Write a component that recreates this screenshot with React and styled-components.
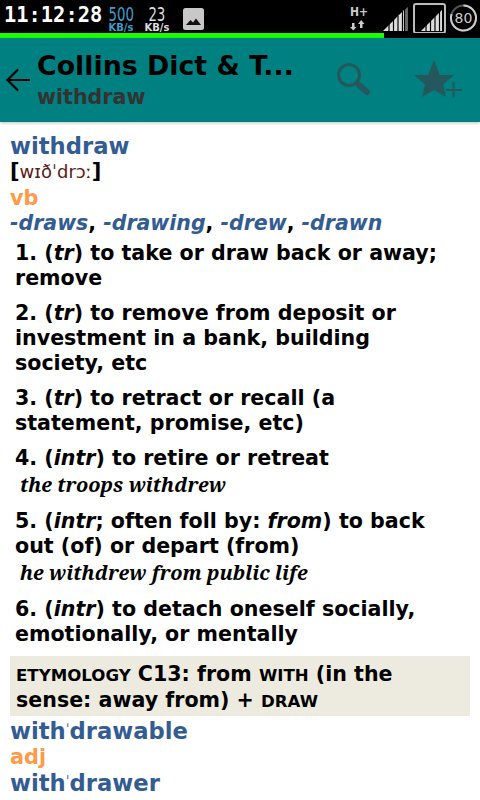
import React from "react";
import styled, { createGlobalStyle } from "styled-components";

const Global = createGlobalStyle`
  html, body { margin: 0; padding: 0; background: #fff; }
  body { width: 480px; height: 800px; overflow: hidden; font-family: "DejaVu Sans", sans-serif; }
`;
const Page = styled.div`width: 480px; height: 800px; overflow: hidden; display: flex; flex-direction: column;`;
const StatusBar = styled.div`
  height: 33px; background: #000; display: flex; align-items: flex-start; flex: none; color: #ddd;
`;
const Clock = styled.span`
  font: bold 20.4px/30px "DejaVu Sans Mono", "DejaVu Sans", monospace; color: #fff; margin-left: 4px; width: 100px;
`;
const Speed = styled.div`
  width: ${p => p.$w}px; display: flex; flex-direction: column; align-items: center; color: ${p => p.$c}; padding-top: 5px;
`;
const SpeedNum = styled.span`font: 19px/18px "DejaVu Sans Condensed", "DejaVu Sans", sans-serif; transform: scaleX(.78);`;
const SpeedUnit = styled.span`font: bold 10px/10px "DejaVu Sans", sans-serif;`;
const PhotoIcon = styled.svg`margin: 8px 0 0 7px; flex: none;`;
const Spacer = styled.div`flex: 1;`;
const Progress = styled.div`height: 5px; background: #000; flex: none;`;
const ProgressFill = styled.div`height: 100%; background: #1cff00;`;
const ActionBar = styled.div`
  height: 84px; background: #008080; display: flex; flex: none; align-items: center; box-shadow: 0 1px 3px rgba(0,0,0,.25);
`;
const BackIcon = styled.svg`margin: 0 0 0 5px; flex: none;`;
const TitleBox = styled.div`width: 294px; margin-left: 6px; display: flex; flex-direction: column; margin-top: -2px;`;
const Title = styled.div`font: bold 26.8px/36px "DejaVu Sans", sans-serif; color: #000; white-space: nowrap;`;
const Subtitle = styled.div`font: bold 20.6px/26px "DejaVu Sans", sans-serif; color: #333;`;
const ActionIcon = styled.svg`flex: none; margin-left: ${p => p.$ml}px;`;
const Content = styled.div`padding: 11px 10px 0; flex: 1; font-weight: bold; color: #000;`;
const Head = styled.div`font: bold 22.7px/26px "DejaVu Sans", sans-serif; color: #335c92;`;
const Tick = styled.span`font-size: 14px; font-weight: 400; vertical-align: 5px; line-height: 0;`;
const Phon = styled.div`font: 18px/26px "DejaVu Sans", sans-serif; color: #5c1a1a;`;
const Bracket = styled.span`font-weight: bold; font-size: 21px; color: #000; line-height: 0;`;
const Pos = styled.div`font: bold 20.8px/26px "DejaVu Sans", sans-serif; color: #ff9a4a;`;
const Forms = styled.div`font: bold 20.5px/24px "DejaVu Sans", sans-serif; color: #000; margin-bottom: 6px; i { color: #335c92; }`;
const Sense = styled.div`font: bold 20.6px/25px "DejaVu Sans", sans-serif; padding: 0 15px 0 5px; margin-bottom: 10px;`;
const Example = styled.div`font: italic bold 19.9px/27px "Noto Serif", "DejaVu Serif", serif; margin-left: 5px; padding-bottom: 1px;`;
const Etym = styled.div`background: #edebe0; font: bold 20.6px/26px "DejaVu Sans", sans-serif; padding: 5px 6px 3px; margin: -1px 0 2px;`;
const Sc = styled.span`font-size: 16.6px; line-height: 0; text-transform: uppercase;`;
const StatusLabel = styled.text`font: bold 12px "DejaVu Sans Condensed", "DejaVu Sans", sans-serif; fill: #ccc;`;
const BatteryLabel = styled.text`font: 14px "DejaVu Sans", sans-serif; fill: #ccc;`;

export default function App() {
  return (
    <Page>
      <Global />
      <StatusBar>
        <Clock>11:12:28</Clock>
        <Speed $w={34} $c="#3f9dc9"><SpeedNum>500</SpeedNum><SpeedUnit>KB/s</SpeedUnit></Speed>
        <Speed $w={38} $c="#ddd"><SpeedNum>23</SpeedNum><SpeedUnit>KB/s</SpeedUnit></Speed>
        <PhotoIcon width="21" height="22" viewBox="0 0 21 22">
          <rect width="21" height="22" rx="2.5" fill="#c8c8c8" />
          <path d="M3 17l4.5-5 2.5 2.5 3-4 5 6.500z" fill="#111" />
        </PhotoIcon>
        <Spacer />
        <svg width="130" height="33" viewBox="350 0 130 33">
          <StatusLabel x="350" y="16">H+</StatusLabel>
          <path d="M352 23h2.500v4h2l-3.200 3.500-3.300-3.500h2z" fill="#ccc" />
          <path d="M360 28h2.500v-4h2l-3.300-4-3.200 4h2z" fill="#ccc" />
          <path d="M383 31L404 10v21z" fill="#ddd" />
          <path d="M405 9.500l3-2.500v24h-3z" fill="#666" />
          <path d="M389 31v-8M393.500 31v-12M398 31v-15M402.500 31V10" stroke="#000" strokeWidth="1.200" />
          <rect x="414" y="4" width="31" height="29" rx="2" fill="none" stroke="#bbb" strokeWidth="2" />
          <path d="M421 31L442 10v21z" fill="#ddd" />
          <path d="M426 31v-8M430.500 31v-12M435 31v-15M439.500 31V10" stroke="#000" strokeWidth="1.200" />
          <circle cx="463.500" cy="18" r="12.500" fill="none" stroke="#555" strokeWidth="2" />
          <path d="M463.500 5.500A12.500 12.500 0 1 1 451.600 14.100" fill="none" stroke="#ccc" strokeWidth="2" />
          <BatteryLabel x="463.500" y="23" textAnchor="middle">80</BatteryLabel>
        </svg>
      </StatusBar>
      <Progress><ProgressFill style={{ width: 384 }} /></Progress>
      <ActionBar>
        <BackIcon width="26" height="26" viewBox="0 0 26 26">
          <path d="M25 13H3M13 2.500L2.500 13 13 23.500" fill="none" stroke="#000" strokeWidth="2.200" />
        </BackIcon>
        <TitleBox>
          <Title>Collins Dict &amp; T...</Title>
          <Subtitle>withdraw</Subtitle>
        </TitleBox>
        <ActionIcon $ml={0} width="44" height="56" viewBox="331 52 44 56">
          <circle cx="349" cy="75" r="10.500" fill="none" stroke="#25585c" strokeWidth="3" />
          <path d="M359 85l8 7" stroke="#25585c" strokeWidth="6" strokeLinecap="round" />
        </ActionIcon>
        <ActionIcon $ml={35} width="56" height="56" viewBox="410 52 56 56">
          <path d="M434 60l6 15h14l-11 9.500 3 12.500-12-7-12 7 3-12.500L414 75h14z" fill="#25585c" />
          <path d="M453.500 81.500v16M446 90h16" stroke="#25585c" strokeWidth="2" />
        </ActionIcon>
      </ActionBar>
      <Content>
        <Head>withdraw</Head>
        <Phon><Bracket>[</Bracket>wɪðˈdrɔː<Bracket>]</Bracket></Phon>
        <Pos>vb</Pos>
        <Forms><i>-draws</i>, <i>-drawing</i>, <i>-drew</i>, <i>-drawn</i></Forms>
        <Sense>1. (<i>tr</i>) to take or draw back or away; remove</Sense>
        <Sense>2. (<i>tr</i>) to remove from deposit or investment in a bank, building society, etc</Sense>
        <Sense>3. (<i>tr</i>) to retract or recall (a statement, promise, etc)</Sense>
        <Sense>4. (<i>intr</i>) to retire or retreat<Example>the troops withdrew</Example></Sense>
        <Sense>5. (<i>intr</i>; often foll by: <i>from</i>) to back out (of) or depart (from)<Example>he withdrew from public life</Example></Sense>
        <Sense>6. (<i>intr</i>) to detach oneself socially, emotionally, or mentally</Sense>
        <Etym><Sc>Etymology</Sc> C13: from <Sc>with</Sc> (in the sense: away from) + <Sc>draw</Sc></Etym>
        <Head>with<Tick>ˈ</Tick>drawable</Head>
        <Pos>adj</Pos>
        <Head>with<Tick>ˈ</Tick>drawer</Head>
      </Content>
    </Page>
  );
}
